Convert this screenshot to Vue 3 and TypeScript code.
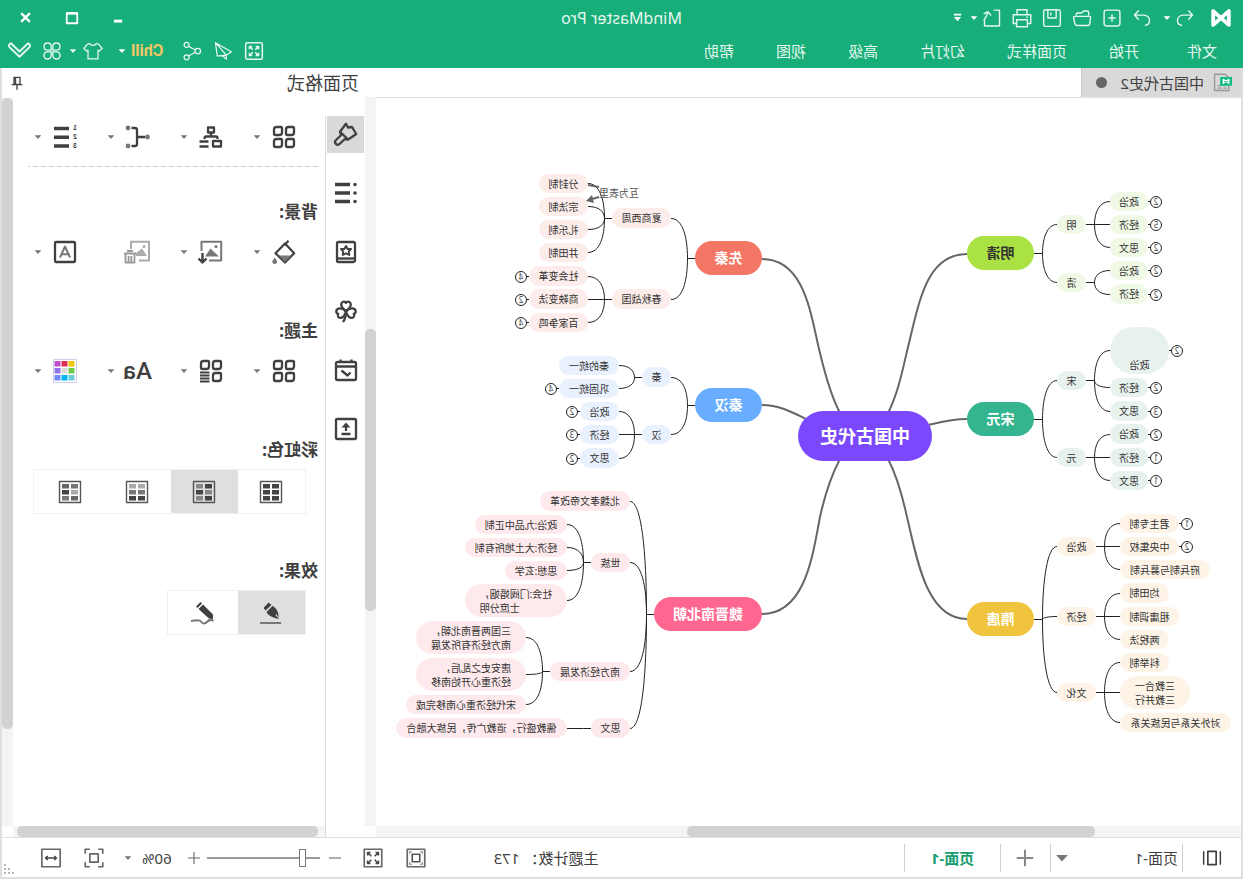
<script setup lang="ts">
import { computed, defineComponent, h, ref } from 'vue'

/* ---------- icons ---------- */
type Shape = {
  d?: string
  text?: string
  x?: number
  y?: number
  size?: number
  fill?: string
  stroke?: string
  w?: number
  o?: number
  rot?: number
}

const line = (d: string, w = 2.3, stroke = 'currentColor', o = 1): Shape => ({ d, w, stroke, o, fill: 'none' })
const solid = (d: string, fill = 'currentColor', o = 1): Shape => ({ d, fill, stroke: 'none', w: 0, o })
const circle = (x: number, y: number, r: number) =>
  `M${x - r} ${y}a${r} ${r} 0 1 0 ${2 * r} 0a${r} ${r} 0 1 0 ${-2 * r} 0Z`
const box = (x: number, y: number, w: number, hh: number) => `M${x} ${y}h${w}v${hh}h${-w}Z`
const round = (x: number, y: number, w: number, hh: number, r: number) =>
  `M${x + r} ${y}h${w - 2 * r}a${r} ${r} 0 0 1 ${r} ${r}v${hh - 2 * r}a${r} ${r} 0 0 1 ${-r} ${r}h${2 * r - w}a${r} ${r} 0 0 1 ${-r} ${-r}v${2 * r - hh}a${r} ${r} 0 0 1 ${r} ${-r}Z`
const tile = (x: number, y: number) =>
  `M${x + 1} ${y}h4.5a2.5 2.5 0 0 1 2.5 2.5v4.5a1 1 0 0 1 -1 1h-4.5a2.5 2.5 0 0 1 -2.5 -2.5v-4.5a1 1 0 0 1 1 -1Z`
const swatch = (tones: string[]): Shape[] => [
  line(box(1.5, 1.5, 21, 21), 1.4, '#555'),
  ...tones.map((t, i) => solid(box(4 + (i % 2) * 9, 4 + Math.floor(i / 2) * 6, 7, 4.5), t)),
]
const arrows4 =
  'M6.5 10V6.5H10M7 7L10.5 10.5M14 6.5H17.5V10M17 7L13.5 10.5M6.5 14V17.5H10M7 17L10.5 13.5M14 17.5H17.5V14M17 17L13.5 13.5'
const heart = 'M12 12.5C9 10 7.2 8 7.2 5.6C7.2 2.6 10.6 1.6 12 3.8C13.4 1.6 16.8 2.6 16.8 5.6C16.8 8 15 10 12 12.5Z'
const palette = ['#f0c400', '#dc2f55', '#c04fd0', '#6ecb45', '#dcdcdc', '#9373ea', '#6cccdc', '#00b8f5', '#7388ff']

const glyphs: Record<string, Shape[]> = {
  logo: [line('M3.5 4.5V19.5L20.5 4.5V19.5Z', 4.2)],
  undo: [line('M8 3L3 8.5L8 14M3.5 8.5H14C19 8.5 21 12 21 15C21 18 19 20.5 15.5 21', 1.7)],
  redo: [line('M16 3L21 8.5L16 14M20.5 8.5H10C5 8.5 3 12 3 15C3 18 5 20.5 8.5 21', 1.7)],
  plusBox: [line(round(2.5, 2.5, 19, 19, 2.5), 1.7), line('M12 7.5V16.5M7.5 12H16.5', 1.7)],
  open: [line('M4 9V5.5Q4 3.5 6 3.5H10L12.5 6H17Q19 6 19 8V9M3.5 10H20.5Q22.5 10 22 12L20.5 19Q20 21 18 21H5Q3 21 2.7 19L1.8 12Q1.5 10 3.5 10Z', 1.7)],
  save: [line(round(2, 2, 20, 20, 2.5), 1.7), line('M7 2.5V12H17V2.5M13.5 5.5V9', 1.7)],
  print: [line('M6 8V2H18V8M5.5 18.5H1.5V8H22.5V18.5H18.5M5.5 14H18.5V22.5H5.5ZM5 11H7', 1.7)],
  export: [line('M10 2.5H3V21.5H21V13M13 9L17 4.5L22 7M17 5C18 9 19 11 22 15', 1.7)],
  caret: [solid('M2 7H22L12 18Z')],
  more: [solid('M4 4H20V7.5H4ZM4 11H20L12 20Z')],
  min: [solid('M7 14H17V17.5H7Z')],
  max: [line('M5 5.5H19V19H5Z', 2.4), line('M5 6H19', 3)],
  close: [line('M6.5 6.5L17.5 17.5M17.5 6.5L6.5 17.5', 3)],
  full: [line(round(2, 2, 20, 20, 2), 1.8), line(arrows4, 1.8)],
  send: [line('M21 2L2 13L8 17L19 18ZM21 2L8 17V22L12 18', 1.5)],
  share: [line(circle(18.5, 4.5, 3), 1.5), line(circle(18.5, 19.5, 3), 1.5), line(circle(5, 12, 3.3), 1.5), line('M8 10.5L11.5 9L16 6.5M8 13.5L16 18', 1.5)],
  shirt: [line('M8 3C9 6 15 6 16 3L19 4L23 9L19.5 12L18 11V21.5H6V11L4.5 12L1 9L5 4Z', 1.5)],
  loops: [0, 90, 180, 270].map((rot) => ({ ...line('M11 11H6.5A4.3 4.3 0 1 1 11 6.5Z', 1.6), rot })),
  chevrons: [line('M3 4.5L12 13L21 4.5Q24 5.5 22.5 8.5L12 18.5L1.5 8.5Q0 5.5 3 4.5Z', 2)],
  doc: [line('M9 1.5H22V22H4V6Z', 1.8, '#999'), line('M7 16H11M13 16H18M7 19H11M13 19H18', 1.5, '#999'), solid(box(0, 5, 15, 11), '#0fbf80'), line('M4 8V13L11 8V13Z', 1.6, '#fff')],
  pin: [line('M7.5 3.5H16.5V14H7.5ZM4 14.5H20M12 15V22', 2), line('M14.5 4V14', 2.5)],
  grid4: [line(tile(2, 2)), line(tile(14, 2)), line(tile(2, 14)), line(tile(14, 14))],
  org: [line(box(9, 2.5, 6, 5)), line('M12 8V11.5M5.5 14V13Q5.5 11.5 7 11.5H17Q18.5 11.5 18.5 14'), line(box(2, 16, 8, 5.5)), line('M14.5 16.5H23.5M14.5 21.5H23.5')],
  connect: [line('M18.5 3H15Q13 3 13 5V19Q13 21 15 21H18.5M13 12H5'), solid(circle(22, 3, 2.4), '#777'), solid(circle(22, 21, 2.4), '#777'), solid(circle(2.5, 12, 2.4), '#777')],
  number: [line('M8 3.5H23M8 12.2H23M8 21H23', 3.4), { text: '1', x: 0, y: 5, size: 7 }, { text: '2', x: 0, y: 14, size: 7 }, { text: '3', x: 0, y: 23, size: 7 }],
  bucket: [line('M11 3.5L20.5 13.2L11 22.5L1.8 13.2ZM7.5 .8L11.5 5', 2.2), solid('M4.5 15.5H17.5L11 22Z', '#777'), solid('M21.3 17.5L23.5 20.8A2.4 2.4 0 1 1 19.1 20.8Z', '#777')],
  picture: [line('M14 20.5H1.8V1.8H21.5V11', 2, '#777'), solid('M4 16.5L12.5 8.5L18 16.5Z', '#777'), solid(circle(7, 6.5, 1.5), '#777'), line('M20.5 13V22M16.5 18.5L20.5 22.5L24.5 18.5', 2.4)],
  pictureDel: [line('M11 20.5H1V1.8H19V9', 2, '#aaa'), solid('M3 16L8 8.5L14 13V16Z', '#aaa'), solid(circle(6, 6.5, 1.5), '#aaa'), line('M14 13.5H26M17 11H23M15.5 14V22.5H24.5V14M18.7 16V22M21.4 16V22', 1.8, '#999')],
  letterBox: [line(round(2, 2, 20, 20, 1)), line('M7 17.5L12 6.5L17 17.5M8.8 14.3H15.2', 2, '#777')],
  gridLines: [line(tile(2, 2)), line(tile(14, 2)), line(tile(2, 14)), line('M13.5 13.5H23M13.5 16.5H23M13.5 19.5H23M13.5 22.5H23', 1.8)],
  palette: [line(box(0.5, 0.5, 23, 23), 1, '#cdd0e8'), ...palette.map((c, i) => solid(box(2.5 + (i % 3) * 7, 2 + Math.floor(i / 3) * 7, 6, 5.5), c))],
  rain1: swatch(['#444', '#444', '#444', '#444', '#444', '#444']),
  rain2: swatch(['#444', '#888', '#888', '#444', '#444', '#888']),
  rain3: swatch(['#aaa', '#aaa', '#777', '#777', '#444', '#444']),
  rain4: swatch(['#777', '#666', '#aaa', '#444', '#666', '#777']),
  pen: [solid('M14.5 1.5L19.5 7L17.5 9.5L11.5 4Z'), solid('M10.5 5L16.5 11C15 14.5 11 16.5 4 18L7.5 14L6.5 13L4 17C4.5 11 6.5 7 10.5 5Z'), line('M2 22H23', 2, '#777')],
  pencil: [solid('M15.5 1L20 5.5L18.5 7L14 2.5Z'), solid('M13 3.5L17.5 8L7 17.5L3 18L3 13.5Z'), line('M2.5 20C5 17.5 7 19 9 21S13 23 15 20.5S21 20 25 20', 2, '#777')],
  brush: [line('M12 1.8L18 9.8L9.8 17.5L1.8 12L6 5L10 5.5Z'), line('M18 10L16.8 13L22 18A2.6 2.6 0 0 1 18.5 22L13.2 17L10 17.5')],
  list: [line('M8 3.5H23M8 12H23M8 20.5H23', 3.4), solid(circle(3, 3.5, 1.8)), solid(circle(3, 12, 1.8)), solid(circle(3, 20.5, 1.8))],
  book: [line(round(3, 2, 18, 20, 1.5)), line('M3 18.5H21'), line('M12 6L13.6 9H17L14.7 11.6L15.3 15L12 13.4L8.7 15L9.3 11.6L7 9H10.4Z', 1.9)],
  clover: [line(heart), { ...line(heart), rot: -110 }, { ...line(heart), rot: 110 }, line('M12 12C12 16 12.5 20 15 23')],
  calendar: [line(round(2, 4, 20, 18, 1.5)), line('M2 8.5H22M6.5 1.5V5M17.5 1.5V5'), line('M7.5 14.5L10.5 17.5L16.5 12.5')],
  upload: [line(round(2, 2, 20, 20, 1)), line('M7.5 17H16.5M12 14V8'), solid('M7.5 10.5L12 5.5L16.5 10.5Z')],
  pages: [line('M7 4H17V20H7Z', 2), line('M2 4V20M22 4V20', 1.8)],
  plus: [line('M12 3V21M3 12H21', 2.2, '#888')],
  plusThin: [line('M12 3V21M3 12H21', 1.6, '#666')],
  minusThin: [line('M3 12H21', 1.6, '#666')],
  frame: [line(box(1.5, 1.5, 21, 21), 2, '#666'), line(box(7.5, 7.5, 9, 9), 2, '#555'), line('M4.5 7V4.5H7M17 4.5H19.5V7M4.5 17V19.5H7M17 19.5H19.5V17', 1.3, '#777')],
  expand: [line(box(1.5, 1.5, 21, 21), 2, '#666'), line('M5.5 9V5.5H9M5.5 5.5L10 10M15 5.5H18.5V9M18.5 5.5L14 10M5.5 15V18.5H9M5.5 18.5L10 14M15 18.5H18.5V15M18.5 18.5L14 14', 1.8, '#444')],
  focus: [line('M1.5 7V1.5H7M17 1.5H22.5V7M1.5 17V22.5H7M17 22.5H22.5V17', 2, '#666'), line(box(7, 7, 10, 10), 2, '#666')],
  widthFit: [line(box(1, 1.5, 22, 21), 2, '#666'), line('M5.5 12H18.5M8 9.5L5.5 12L8 14.5M16 9.5L18.5 12L16 14.5', 1.8, '#444')],
}

const Glyph = defineComponent({
  props: { name: { type: String, required: true }, size: { type: Number, default: 20 } },
  setup(p) {
    return () =>
      h(
        'svg',
        { width: p.size, height: p.size, viewBox: '0 0 24 24', overflow: 'visible', 'aria-hidden': 'true' },
        (glyphs[p.name] ?? []).map((s) =>
          s.text
            ? h(
                'text',
                { x: s.x, y: s.y, 'font-size': s.size, 'font-family': 'Liberation Sans, sans-serif', 'font-weight': 700, fill: 'currentColor' },
                s.text,
              )
            : h('path', {
                d: s.d,
                fill: s.fill,
                stroke: s.stroke,
                'stroke-width': s.w,
                'stroke-linejoin': 'round',
                opacity: s.o,
                transform: s.rot ? `rotate(${s.rot} 12 12)` : undefined,
              }),
        ),
      )
  },
})

/* ---------- chrome ---------- */
const quick = [
  { icon: 'undo', label: '撤销' },
  { icon: 'caret', label: '撤销列表' },
  { icon: 'redo', label: '重做' },
  { icon: 'plusBox', label: '新建' },
  { icon: 'open', label: '打开' },
  { icon: 'save', label: '保存' },
  { icon: 'print', label: '打印' },
  { icon: 'export', label: '导出' },
  { icon: 'caret', label: '导出选项' },
  { icon: 'more', label: '自定义' },
]
const menus = ['文件', '开始', '页面样式', '幻灯片', '高级', '视图', '帮助']
const navs = [
  { icon: 'brush', label: '页面格式' },
  { icon: 'list', label: '大纲' },
  { icon: 'book', label: '图标' },
  { icon: 'clover', label: '剪贴画' },
  { icon: 'calendar', label: '任务' },
  { icon: 'upload', label: '导出' },
]
const layoutTools = ['grid4', 'org', 'connect', 'number']
const backgroundTools = ['bucket', 'picture', 'pictureDel', 'letterBox']
const themeTools = ['grid4', 'gridLines', 'Aa', 'palette']
const rainbows = ['rain1', 'rain2', 'rain3', 'rain4']
const effects = ['pen', 'pencil']
const activeNav = ref(0)
const activeRainbow = ref(1)
const activeEffect = ref(0)
const page = ref('页面-1')
const zoom = ref(60)

/* ---------- mind map ---------- */
// A leaf is [text, left, top, width, height, badge].
type Leaf = [string, number, number, number, number, number?]
type Twig = { node: Leaf; leaves: Leaf[] }
type Branch = { node: Leaf; side: 1 | -1; color: string; tint: string; ink?: string; trunk: string; twigs: Twig[] }

const branches: Branch[] = [
  {
    node: ['先秦', 479, 143, 67, 34], side: 1, color: '#f37764', tint: '#fcecea',
    trunk: 'M479 161C435 161 430 220 421 255C416 276 410 298 401 315',
    twigs: [
      { node: ['夏商西周', 570, 110, 59, 20], leaves: [['分封制', 653, 76, 49, 19], ['宗法制', 653, 99, 49, 19], ['礼乐制', 653, 122, 49, 19], ['井田制', 653, 145, 49, 19]] },
      { node: ['春秋战国', 570, 191, 59, 20], leaves: [['社会变革', 653, 168, 59, 20, 4], ['商鞅变法', 653, 191, 59, 20, 2], ['百家争鸣', 653, 215, 59, 19, 4]] },
    ],
  },
  {
    node: ['秦汉', 479, 290, 67, 34], side: 1, color: '#68adff', tint: '#e9f1ff',
    trunk: 'M479 307C462 307 449 314 435 321',
    twigs: [
      { node: ['秦', 570, 269, 29, 20], leaves: [['秦的统一', 622, 258, 60, 19], ['巩固统一', 622, 281, 60, 19, 4]] },
      { node: ['汉', 570, 327, 29, 19], leaves: [['政治', 622, 304, 39, 19, 2], ['经济', 622, 327, 39, 19, 3], ['思文', 622, 350, 39, 20, 2]] },
    ],
  },
  {
    node: ['魏晋南北朝', 479, 499, 108, 34], side: 1, color: '#ff6791', tint: '#feeaed',
    trunk: 'M479 516C435 516 428 455 421 419C416 396 410 378 401 361',
    twigs: [
      { node: ['北魏孝文帝改革', 611, 393, 90, 20], leaves: [] },
      { node: ['世族', 611, 455, 39, 19], leaves: [['政治:九品中正制', 674, 417, 92, 19], ['经济:大土地所有制', 674, 440, 102, 19], ['思想:玄学', 674, 463, 62, 19], ['社会:门阀婚姻，\n　　　 士庶分明', 674, 486, 102, 33]] },
      { node: ['南方经济发展', 611, 564, 80, 19], leaves: [['三国两晋南北朝，\n南方经济有所发展', 715, 523, 110, 33], ['唐安史之乱后，\n经济重心开始南移', 715, 560, 110, 33], ['宋代经济重心南移完成', 715, 597, 120, 19]] },
      { node: ['思文', 611, 620, 39, 20], leaves: [['儒教盛行，道教广传，民族大融合', 674, 620, 171, 20]] },
    ],
  },
  {
    node: ['明清', 207, 138, 67, 34], side: -1, color: '#a9e242', tint: '#f0f9e6', ink: '#333',
    trunk: 'M274 156C315 156 322 205 333 249C338 270 343 296 353 315',
    twigs: [
      { node: ['明', 155, 117, 29, 19], leaves: [['政治', 93, 94, 38, 19, 2], ['经济', 93, 117, 38, 19, 5], ['思文', 93, 140, 38, 19, 2]] },
      { node: ['清', 155, 175, 29, 19], leaves: [['政治', 93, 163, 38, 19, 2], ['经济', 93, 186, 38, 20, 2]] },
    ],
  },
  {
    node: ['宋元', 207, 304, 67, 34], side: -1, color: '#35b58f', tint: '#e7f2ee',
    trunk: 'M274 321C288 321 300 324 313 327',
    twigs: [
      { node: ['宋', 155, 273, 29, 19], leaves: [['\n\n政治', 72, 229, 59, 47, 2], ['经济', 93, 280, 38, 19, 2], ['思文', 93, 303, 38, 20, 3]] },
      { node: ['元', 155, 350, 29, 19], leaves: [['政治', 93, 326, 38, 20, 2], ['经济', 93, 350, 38, 19, 1], ['思文', 93, 373, 38, 19, 1]] },
    ],
  },
  {
    node: ['隋唐', 207, 504, 67, 34], side: -1, color: '#f0c43c', tint: '#fdf4e7',
    trunk: 'M274 521C315 521 324 460 334 419C339 396 344 378 353 361',
    twigs: [
      { node: ['政治', 145, 439, 39, 19], leaves: [['君主专制', 62, 416, 59, 19, 1], ['中央集权', 62, 439, 59, 19, 2], ['府兵制与募兵制', 31, 462, 90, 19]] },
      { node: ['经济', 145, 509, 39, 19], leaves: [['均田制', 72, 485, 49, 20], ['租庸调制', 62, 509, 59, 19], ['两税法', 72, 532, 49, 19]] },
      { node: ['文化', 145, 585, 39, 19], leaves: [['科举制', 72, 555, 49, 19], ['三教合一\n三教并行', 51, 578, 70, 33], ['对外关系与民族关系', 10, 615, 111, 19]] },
    ],
  },
]

const mid = (n: Leaf) => Math.floor(n[2] + n[4] / 2) + 0.5
const outer = (n: Leaf, side: number) => (side > 0 ? n[1] + n[3] : n[1])
const inner = (n: Leaf, side: number) => (side > 0 ? n[1] : n[1] + n[3])

function links(parent: Leaf, kids: Leaf[], side: number): string[] {
  if (!kids.length) return []
  const px = outer(parent, side)
  const py = mid(parent)
  const jx = px + side * 8 - 0.5
  return [
    `M${px} ${py}H${jx}`,
    ...kids.map((k) => {
      const ex = inner(k, side)
      const ey = mid(k)
      if (Math.abs(ey - py) < 2) return `M${jx} ${py}H${ex}`
      return `M${jx} ${py}C${jx} ${py + (ey - py) * 0.55} ${jx + side * 5} ${ey} ${ex} ${ey}`
    }),
  ]
}

const wires = computed(() =>
  branches.flatMap((b) => [
    ...links(b.node, b.twigs.map((t) => t.node), b.side),
    ...b.twigs.flatMap((t) => links(t.node, t.leaves, b.side)),
  ]),
)

const topics = computed(() =>
  branches.flatMap((b) => [
    { n: b.node, main: true, bg: b.color, ink: b.ink ?? '#fff' },
    ...b.twigs.flatMap((t) => [t.node, ...t.leaves].map((n) => ({ n, main: false, bg: b.tint, ink: '#333' }))),
  ]),
)

const badges = computed(() =>
  branches.flatMap((b) =>
    b.twigs.flatMap((t) =>
      t.leaves
        .filter((l) => l[5])
        .map((l) => ({ x: outer(l, b.side) + b.side * 8, y: mid(l), from: outer(l, b.side), side: b.side, value: l[5] })),
    ),
  ),
)

const place = (n: Leaf) => ({ left: n[1] + 'px', top: n[2] + 'px', width: n[3] + 'px', height: n[4] + 'px' })
</script>

<template>
  <div class="window">
    <header class="chrome">
      <div class="titlebar">
        <div class="quick">
          <Glyph class="logo" name="logo" :size="22" />
          <button v-for="q in quick" :key="q.label" :class="['ib', { tiny: q.icon === 'caret' || q.icon === 'more' }]" :aria-label="q.label">
            <Glyph :name="q.icon" :size="q.icon === 'caret' ? 8 : q.icon === 'more' ? 11 : 20" />
          </button>
        </div>
        <h1>MindMaster Pro</h1>
        <div class="winctl">
          <button class="ib" aria-label="最小化"><Glyph name="min" /></button>
          <button class="ib" aria-label="最大化"><Glyph name="max" :size="18" /></button>
          <button class="ib" aria-label="关闭"><Glyph name="close" :size="19" /></button>
        </div>
      </div>
      <div class="menubar">
        <nav class="menus">
          <button v-for="m in menus" :key="m" class="ib">{{ m }}</button>
        </nav>
        <div class="extras">
          <button class="ib" aria-label="全屏"><Glyph name="full" /></button>
          <button class="ib" aria-label="发送"><Glyph name="send" /></button>
          <button class="ib" aria-label="分享"><Glyph name="share" /></button>
          <button class="ib chill">Chill<Glyph name="caret" :size="8" /></button>
          <button class="ib shirt" aria-label="皮肤"><Glyph name="shirt" /><Glyph name="caret" :size="8" /></button>
          <button class="ib" aria-label="应用"><Glyph name="loops" :size="20" /></button>
          <button class="ib" aria-label="收起"><Glyph name="chevrons" :size="23" /></button>
        </div>
      </div>
    </header>

    <div class="frame">
      <div class="workspace">
        <main class="editor">
          <div class="tabs">
            <button class="ib tab"><Glyph name="doc" :size="19" /><span>中国古代史2</span><i class="dirty"></i></button>
          </div>
          <div class="canvas">
            <div class="map">
              <svg class="wires" width="865" height="728" aria-hidden="true">
                <g fill="none" stroke="#222">
                  <path v-for="(w, i) in wires" :key="i" :d="w" />
                  <path v-for="(b, i) in badges" :key="'b' + i" :d="`M${b.from} ${b.y}h${b.side * 3}`" />
                </g>
                <path v-for="b in branches" :key="b.node[0]" :d="b.trunk" fill="none" stroke="#666" stroke-width="2" />
                <path d="M653 87L642 89M642 99L649 101" fill="none" stroke="#666" stroke-width="2" />
                <path d="M655 103L647 105L649 97Z" fill="#666" />
              </svg>
              <span class="relation">互为表里</span>
              <div v-for="(t, i) in topics" :key="i" :class="['topic', { main: t.main }]" :style="{ ...place(t.n), background: t.bg, color: t.ink }">
                <span>{{ t.n[0] }}</span>
              </div>
              <span v-for="(b, i) in badges" :key="'n' + i" class="badge" :style="{ left: b.x + 'px', top: b.y + 'px' }">{{ b.value }}</span>
              <div class="topic root"><span>中国古代史</span></div>
            </div>
          </div>
          <div class="track across"><i class="lead"></i><i class="thumb"></i><i class="rest"></i></div>
        </main>

        <div class="gutter">
          <div class="track down"><i class="lead"></i><i class="thumb"></i><i class="rest"></i></div>
        </div>

        <aside class="panel">
          <div class="panel-head">
            <h2>页面格式</h2>
            <button class="ib" aria-label="固定"><Glyph name="pin" :size="16" /></button>
          </div>
          <div class="panel-body">
            <nav class="rail">
              <button v-for="(n, i) in navs" :key="n.icon" :class="['ib', { on: activeNav === i }]" :aria-label="n.label" @click="activeNav = i">
                <Glyph :name="n.icon" :size="24" />
              </button>
            </nav>
            <div class="content">
              <div class="options">
                <div class="tools">
                  <button v-for="t in layoutTools" :key="t" class="ib" :aria-label="t"><Glyph :name="t" :size="24" /><Glyph class="drop" name="caret" :size="8" /></button>
                </div>
                <hr />
                <h3>背景:</h3>
                <div class="tools">
                  <button v-for="t in backgroundTools" :key="t" class="ib" :aria-label="t">
                    <Glyph :name="t" :size="24" /><Glyph v-if="t !== 'pictureDel'" class="drop" name="caret" :size="8" />
                  </button>
                </div>
                <h3 class="spaced">主题:</h3>
                <div class="tools">
                  <button v-for="t in themeTools" :key="t" class="ib" :aria-label="t">
                    <span v-if="t === 'Aa'" class="aa">Aa</span><Glyph v-else :name="t" :size="24" /><Glyph class="drop" name="caret" :size="8" />
                  </button>
                </div>
                <h3 class="spaced">彩虹色:</h3>
                <div class="segment">
                  <button v-for="(t, i) in rainbows" :key="t" :class="['ib', { on: activeRainbow === i }]" :aria-label="t" @click="activeRainbow = i"><Glyph :name="t" :size="24" /></button>
                </div>
                <h3 class="after">效果:</h3>
                <div class="segment">
                  <button v-for="(t, i) in effects" :key="t" :class="['ib', { on: activeEffect === i }]" :aria-label="t" @click="activeEffect = i"><Glyph :name="t" :size="24" /></button>
                </div>
              </div>
              <div class="track across"><i class="lead"></i><i class="thumb"></i><i class="rest"></i></div>
            </div>
            <div class="gutter side">
              <div class="track down"><i class="thumb"></i><i class="rest"></i></div>
            </div>
          </div>
        </aside>
      </div>

      <footer class="status">
        <button class="ib overview" aria-label="页面概览"><Glyph name="pages" /></button>
        <label class="pagebox">
          <select v-model="page" aria-label="页面"><option>页面-1</option></select>
          <Glyph name="caret" :size="14" />
        </label>
        <button class="ib add" aria-label="添加页面"><Glyph name="plus" :size="22" /></button>
        <button class="ib current">页面-1</button>
        <span class="count">主题计数：<b>173</b></span>
        <div class="zoom">
          <button class="ib" aria-label="适应窗口"><Glyph name="frame" /></button>
          <button class="ib" aria-label="全屏显示"><Glyph name="expand" /></button>
          <button class="ib step" aria-label="缩小"><Glyph name="minusThin" :size="16" /></button>
          <input v-model.number="zoom" type="range" min="10" max="400" aria-label="缩放" />
          <button class="ib step" aria-label="放大"><Glyph name="plusThin" :size="16" /></button>
          <button class="ib percent">{{ zoom }}%<Glyph class="drop" name="caret" :size="8" /></button>
          <button class="ib" aria-label="聚焦"><Glyph name="focus" /></button>
          <button class="ib width" aria-label="适应宽度"><Glyph name="widthFit" /></button>
        </div>
        <svg class="grip" width="10" height="10" aria-hidden="true">
          <path d="M8 0h2v2h-2zM4 4h2v2h-2zM8 4h2v2h-2zM0 8h2v2h-2zM4 8h2v2h-2zM8 8h2v2h-2z" fill="#b5b5b5" />
        </svg>
      </footer>
    </div>
  </div>
</template>

<style>
body {
  background: #fff;
}
</style>

<style scoped>
.window {
  display: flex;
  flex-direction: column;
  height: 100vh;
  min-height: 760px;
  overflow: hidden;
  transform: scaleX(-1);
  font-family: 'Noto Sans', 'Noto Sans CJK SC', sans-serif;
  font-size: 15px;
  line-height: 20px;
  color: #404040;
  background: #fff;
}
.window * {
  box-sizing: border-box;
}
.ib {
  display: inline-flex;
  align-items: center;
  justify-content: center;
  flex: none;
  padding: 0;
  border: 0;
  background: none;
  color: inherit;
  font: inherit;
  white-space: nowrap;
}
svg {
  display: block;
  flex: none;
}
h1,
h2,
h3 {
  margin: 0;
  font-weight: 400;
}

/* header */
.chrome {
  flex: none;
  background: #17ae79;
  color: #e6f7f0;
}
.titlebar {
  display: grid;
  grid-template-columns: 1fr auto 1fr;
  align-items: center;
  height: 35px;
}
.titlebar h1 {
  font-size: 16px;
}
.quick {
  display: flex;
  align-items: center;
  gap: 10px;
  padding-left: 11px;
}
.quick .ib {
  width: 20px;
  height: 24px;
}
.quick .ib.tiny {
  width: 10px;
  margin-left: -7px;
  color: #fff;
}
.quick .ib.tiny + .tiny {
  margin-left: -4px;
}
.logo {
  margin-right: 5px;
  color: #fff;
}
.winctl {
  display: flex;
  justify-content: flex-end;
  padding-right: 3px;
  color: #fff;
}
.winctl .ib {
  width: 46px;
  height: 32px;
}
.menubar {
  display: flex;
  align-items: center;
  justify-content: space-between;
  height: 33px;
  padding-bottom: 2px;
}
.menus {
  display: flex;
  gap: 42px;
  padding-left: 26px;
}
.menus .ib:first-child {
  margin-right: 6px;
}
.extras {
  display: flex;
  align-items: center;
  gap: 11px;
  padding-right: 8px;
}
.chill {
  gap: 5px;
  margin: 0 4px 0 8px;
  color: #f3c564;
  font-family: Roboto, 'Noto Sans', sans-serif;
  font-size: 16px;
  font-weight: 700;
}
.chill svg {
  color: #fff;
}
.shirt {
  gap: 6px;
  margin-right: -4px;
}

/* frame */
.frame {
  display: flex;
  flex: 1;
  flex-direction: column;
  min-height: 0;
  border: solid #dfdfdf;
  border-width: 0 2px 2px;
}
.workspace {
  display: flex;
  flex: 1;
  min-height: 0;
}
.editor {
  display: flex;
  flex: 1;
  flex-direction: column;
  min-width: 0;
}
.tabs {
  display: flex;
  height: 30px;
  border-bottom: 1px solid #e2e2e2;
}
.tab {
  justify-content: flex-start;
  width: 160px;
  padding: 0 14px 0 9px;
  border-right: 1px solid #c8c8c8;
  background: #d9d9d9;
}
.tab span {
  margin-left: 9px;
}
.dirty {
  width: 11px;
  height: 11px;
  margin-left: auto;
  border-radius: 50%;
  background: #666;
}
.canvas {
  flex: 1;
  min-height: 0;
  overflow: hidden;
}
.map {
  position: relative;
  width: 865px;
  height: 728px;
  margin: 0 auto;
}
.wires {
  position: absolute;
  inset: 0;
}
.topic {
  position: absolute;
  display: flex;
  align-items: center;
  justify-content: center;
  border-radius: 30px;
  font-size: 10px;
  line-height: 14px;
  white-space: pre;
}
.topic.main {
  font-size: 14px;
  font-weight: 700;
}
.topic.root {
  left: 309px;
  top: 313px;
  width: 134px;
  height: 50px;
  background: #7b48fd;
  color: #fff;
  font-size: 18px;
  font-weight: 700;
}
.relation {
  position: absolute;
  left: 602px;
  top: 88px;
  font-size: 10px;
  line-height: 14px;
  color: #555;
}
.badge {
  position: absolute;
  width: 12px;
  height: 12px;
  margin: -6px 0 0 -6px;
  border: 1px solid #222;
  border-radius: 50%;
  background: #fff;
  font-size: 8px;
  line-height: 10px;
  text-align: center;
}

/* scrollbars */
.track {
  display: flex;
  flex: none;
  background: #f4f4f4;
}
.track.across {
  height: 11px;
}
.track.down {
  flex: 1;
  flex-direction: column;
}
.thumb {
  border-radius: 5px;
  background: #d2d2d2;
}
.editor .lead {
  flex: 146;
}
.editor .thumb {
  flex: 408;
}
.editor .rest {
  flex: 311;
}
.gutter {
  display: flex;
  flex: none;
  flex-direction: column;
  width: 11px;
  padding: 29px 0 11px;
}
.gutter .lead {
  flex: 232;
}
.gutter .thumb {
  flex: 282;
}
.gutter .rest {
  flex: 215;
}
.gutter.side {
  padding-top: 0;
}
.gutter.side .thumb {
  flex: 631;
}
.gutter.side .rest {
  flex: 97;
}
.content .lead {
  flex: 7;
}
.content .thumb {
  flex: 301;
}
.content .rest {
  flex: 4;
}

/* panel */
.panel {
  display: flex;
  flex: none;
  flex-direction: column;
  width: 363px;
}
.panel-head {
  display: flex;
  align-items: center;
  justify-content: space-between;
  height: 30px;
  padding: 0 7px 0 6px;
}
.panel-head h2 {
  font-size: 18px;
}
.panel-body {
  display: flex;
  flex: 1;
  min-height: 0;
}
.rail {
  display: flex;
  flex: none;
  flex-direction: column;
  gap: 22px;
  width: 40px;
  margin-top: 18px;
  padding-left: 1px;
  border-right: 1px solid #dcdcdc;
}
.rail .ib {
  width: 37px;
  height: 37px;
  padding: 0 1px 1px 0;
}
.ib.on {
  background: #d9d9d9;
}
.content {
  display: flex;
  flex: 1;
  flex-direction: column;
  min-width: 0;
}
.options {
  flex: 1;
  min-height: 0;
  overflow: hidden;
  padding: 27px 15px 0 7px;
}
.tools {
  display: grid;
  grid-template-columns: repeat(4, 73px);
  padding-left: 22px;
}
.tools .ib {
  justify-content: flex-start;
  gap: 11px;
  height: 24px;
}
.drop {
  color: #777;
}
.aa {
  width: 28px;
  margin: 0 -2px;
  font-family: Roboto, sans-serif;
  font-size: 24px;
  font-weight: 500;
}
hr {
  height: 1px;
  margin: 17px 0 33px;
  border: 0;
  background: repeating-linear-gradient(90deg, #d0d0d0 0 5px, transparent 5px 8px);
}
h3 {
  margin-bottom: 16px;
  font-size: 17px;
  font-weight: 700;
  line-height: 24px;
}
h3.spaced {
  margin-top: 55px;
}
h3.after {
  margin-top: 45px;
}
h3:has(+ .segment) {
  margin-bottom: 7px;
}
.segment {
  display: inline-flex;
  height: 45px;
  margin-left: 12px;
  padding-right: 3px;
  border: 1px solid #f0f0f0;
  vertical-align: top;
}
.segment .ib {
  width: 67px;
}
.segment .ib.on {
  background: #dfdfdf;
}

/* status bar */
.status {
  display: flex;
  flex: none;
  align-items: center;
  height: 40px;
  border-top: 1px solid #dfdfdf;
}
.overview {
  width: 59px;
  height: 28px;
  border-right: 1px solid #d0d0d0;
}
.pagebox {
  display: flex;
  align-items: center;
  width: 132px;
  height: 28px;
  padding-right: 4px;
  border-right: 1px solid #d0d0d0;
  color: #777;
}
select {
  flex: 1;
  min-width: 0;
  padding: 0 0 0 4px;
  border: 0;
  background: none;
  appearance: none;
  color: #404040;
  font: inherit;
}
.add {
  width: 50px;
  height: 28px;
  border-right: 1px solid #d0d0d0;
}
.current {
  width: 96px;
  height: 28px;
  border-right: 1px solid #d0d0d0;
  color: #179e70;
  font-weight: 700;
}
.count {
  margin: 0 68px 0 auto;
  white-space: nowrap;
}
.count b {
  margin-left: 4px;
  font-weight: 400;
}
.zoom {
  display: flex;
  align-items: center;
  gap: 23px;
}
.step {
  margin: 0 -16px 0 -3px;
}
.step + .percent {
  margin-left: 7px;
}
.percent {
  gap: 10px;
  margin-right: -3px;
}
.width {
  margin-right: 27px;
}
input[type='range'] {
  width: 113px;
  height: 20px;
  margin: 0;
  appearance: none;
  background: linear-gradient(#999, #999) center / 100% 2px no-repeat;
}
input[type='range'] + .step {
  margin-left: -18px;
}
input[type='range']::-webkit-slider-thumb {
  appearance: none;
  width: 7px;
  height: 18px;
  border: 1px solid #777;
  background: #fff;
}
.grip {
  align-self: flex-end;
  margin: 0 2px 3px 0;
}
</style>
